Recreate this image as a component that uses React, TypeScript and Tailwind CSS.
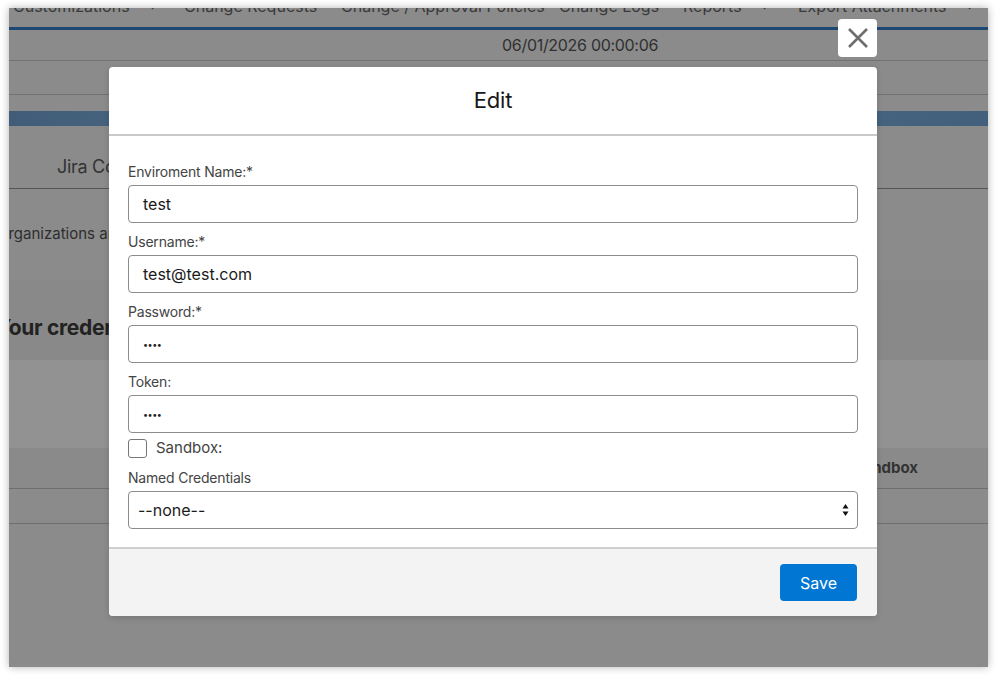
import React from "react";

const navItems = [
  { label: "Customizations", caret: true, w: "w-[171px]" },
  { label: "Change Requests", caret: false, w: "w-[157px]" },
  { label: "Change / Approval Policies", caret: false, w: "w-[218px]" },
  { label: "Change Logs", caret: false, w: "w-[124px]" },
  { label: "Reports", caret: true, w: "w-[115px]" },
  { label: "Export Attachments", caret: true, w: "w-[180px]" },
];

function Field({ label, value, password }: { label: string; value: string; password?: boolean }) {
  return (
    <div className="mb-[9px]">
      <div className="h-[20px] text-[14px] leading-[20px] text-[#444] tracking-[-0.2px]">{label}</div>
      <div className="mt-[3px] h-[38px] rounded-[4px] border border-[#8c8c8c] flex items-center pl-[14px]">
        {password ? (
          <span className="text-[9px] tracking-[-0.5px] text-[#222] mt-[2px]">••••</span>
        ) : (
          <span className="text-[16px] text-[#1b1b1b]">{value}</span>
        )}
      </div>
    </div>
  );
}

function EditModal() {
  return (
    <div className="absolute left-[100px] top-[59px] w-[768px] bg-white rounded-[4px] shadow-[0_2px_6px_rgba(0,0,0,0.15)] overflow-hidden">
      <div className="h-[69px] flex items-center justify-center border-b-2 border-[#c9c9c9]">
        <span className="text-[22px] text-[#181818] tracking-[-0.2px]">Edit</span>
      </div>
      <div className="px-[19px] pt-[26px] pb-[18px] border-b-2 border-[#cfcfcf]">
        <Field label="Enviroment Name:*" value="test" />
        <Field label="Username:*" value="test@test.com" />
        <Field label="Password:*" value="" password />
        <div>
          <div className="h-[20px] text-[14px] leading-[20px] text-[#444] tracking-[-0.2px]">Token:</div>
          <div className="mt-[3px] h-[38px] rounded-[4px] border border-[#8c8c8c] flex items-center pl-[14px]">
            <span className="text-[9px] tracking-[-0.5px] text-[#222] mt-[2px]">••••</span>
          </div>
        </div>
        <div className="mt-[6px] flex items-center gap-[9px] h-[19px]">
          <div className="w-[19px] h-[19px] rounded-[3px] border border-[#777]" />
          <span className="text-[15px] text-[#444]">Sandbox:</span>
        </div>
        <div className="mt-[10px] h-[20px] text-[14px] leading-[20px] text-[#444] tracking-[-0.2px]">Named Credentials</div>
        <div className="mt-[3px] h-[38px] rounded-[4px] border border-[#8c8c8c] flex items-center justify-between pl-[9px] pr-[8px]">
          <span className="text-[16px] text-[#1b1b1b]">--none--</span>
          <svg width="7" height="14" viewBox="0 0 7 14">
            <path d="M3.5 1 L6.5 5.5 L0.5 5.5 Z" fill="#111" />
            <path d="M3.5 13 L6.5 8.5 L0.5 8.5 Z" fill="#111" />
          </svg>
        </div>
      </div>
      <div className="h-[67px] bg-[#f3f3f3] flex items-center justify-end pr-[20px]">
        <button className="w-[77px] h-[37px] rounded-[4px] bg-[#0176d3] text-white text-[16px]">Save</button>
      </div>
    </div>
  );
}

export default function App() {
  return (
    <div className="w-[996px] h-[675px] bg-white pl-[9px] pt-[8px] overflow-hidden" style={{ fontFamily: "Inter, 'Noto Sans', sans-serif" }}>
      <div className="relative w-[979px] h-[659px] bg-[#8b8b8b] shadow-[0_0_8px_rgba(0,0,0,0.3)] overflow-hidden">
        {/* top nav, mostly scrolled off */}
        <div className="h-[19px] overflow-hidden">
          <div className="flex mt-[-12px] pl-[4px] text-[16px] leading-[20px] text-[#3a3a3a]">
            {navItems.map((n) => (
              <div key={n.label} className={`${n.w} flex gap-[18px]`}>
                <span>{n.label}</span>
                {n.caret && <span className="text-[10px]">▼</span>}
              </div>
            ))}
          </div>
        </div>
        <div className="h-[3px] bg-[#1e4872]" />
        <div className="h-[31px] border-b border-[#727272] flex items-center pl-[493px] text-[16px] text-[#303030] tracking-[-0.3px]">
          06/01/2026 00:00:06
        </div>
        <div className="h-[34px] border-b border-[#727272]" />
        <div className="h-[16px]" />
        <div className="h-[15px] bg-[#46627e] bg-[linear-gradient(100deg,#405c78_0%,#4b6883_20%,#40607c_45%,#4a6682_70%,#42607c_100%)]" />
        <div className="h-[63px] border-b border-[#555] flex items-center pl-[48px] pt-[18px]">
          <span className="text-[18px] text-[#333] tracking-[-0.3px]">Jira Connections</span>
        </div>
        <div className="h-[91px] flex items-center -ml-[12px]">
          <span className="text-[15px] text-[#2e2e2e]">Organizations and environments</span>
        </div>
        <div className="h-[80px] bg-[#898989] flex items-center -ml-[13px] pt-[16px]">
          <span className="text-[21px] font-bold text-[#222] tracking-[-0.3px]">Your credentials</span>
        </div>
        <div className="h-[88px] bg-[#929292]" />
        <div className="h-[41px] bg-[#8a8a8a] border-b border-[#6e6e6e] flex items-center justify-end pr-[70px]">
          <span className="text-[15px] font-bold text-[#333]">Sandbox</span>
        </div>
        <div className="h-[35px] border-b border-[#6e6e6e]" />

        <EditModal />

        <button className="absolute left-[829px] top-[11px] w-[39px] h-[38px] rounded-[4px] bg-white flex items-center justify-center">
          <svg width="22" height="22" viewBox="0 0 22 22">
            <path d="M2 2 L20 20 M20 2 L2 20" stroke="#6e6e6e" strokeWidth="2.6" strokeLinecap="butt" />
          </svg>
        </button>
      </div>
    </div>
  );
}
